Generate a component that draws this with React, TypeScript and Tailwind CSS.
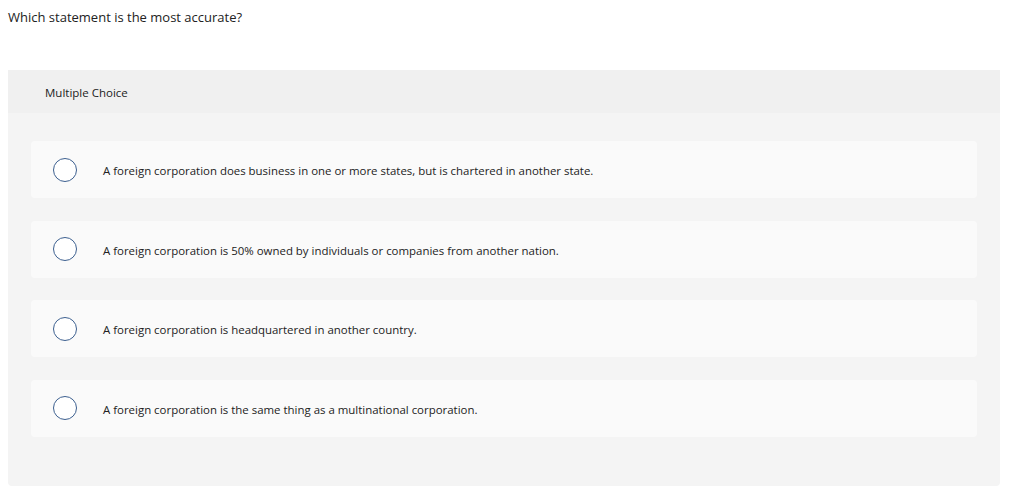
import React from "react";

const options = [
    "A foreign corporation does business in one or more states, but is chartered in another state.",
    "A foreign corporation is 50% owned by individuals or companies from another nation.",
    "A foreign corporation is headquartered in another country.",
    "A foreign corporation is the same thing as a multinational corporation.",
];

const App: React.FC = () => {
    return (
        <div className="w-[1024px] h-[487px] bg-white text-[#222] font-['Open_Sans',sans-serif] overflow-hidden">
            <p className="pl-2 pt-[9px] h-[70px] text-[13px] leading-4">Which statement is the most accurate?</p>

            <section className="ml-2 w-[992px] rounded-b-sm bg-[#f4f4f4] pb-[49.5px]">
                <div className="h-[43px] bg-[#f0f0f0] pl-[37px] pt-[2px] flex items-center text-[11.5px]">Multiple Choice</div>

                <ul className="mt-[28px] mx-[23px] flex flex-col gap-[22.5px]">
                    {options.map((text, idx) => (
                        <li key={idx} className="h-[57px] bg-[#fafafa] rounded-sm flex items-center pl-[22px]">
                            <span className="w-6 h-6 rounded-full border border-[#3c5f8f] bg-white shrink-0" />
                            <span className="ml-[26px] pt-[3px] text-[11.45px]">{text}</span>
                        </li>
                    ))}
                </ul>
            </section>
        </div>
    );
};

export default App;
